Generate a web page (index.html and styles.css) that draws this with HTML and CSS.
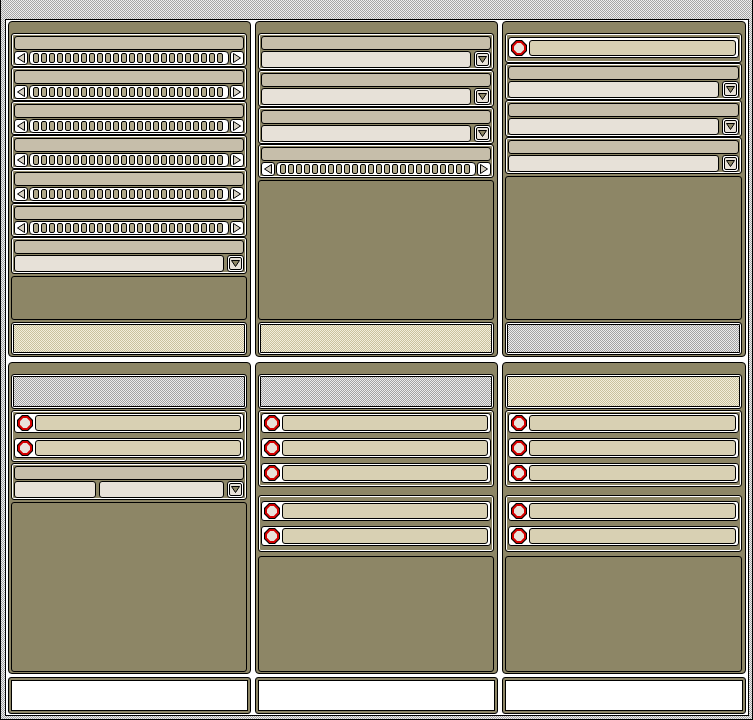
FILE: index.html
```html
<!DOCTYPE html>
<html>
<head>
<meta charset="utf-8">
<link rel="stylesheet" href="styles.css">
</head>
<body>
<div class="win">
  <div class="content">
    <div class="row r1">
      <div class="panel">
        <div class="grp"><div class="hdr"></div><div class="sb"><div class="arr"><svg width="12" height="12" viewBox="0 0 12 12"><polygon points="9.5,1.5 9.5,10.5 2.5,6" fill="#d6d0c2" stroke="#000"/></svg></div><div class="trough"><i></i><i></i><i></i><i></i><i></i><i></i><i></i><i></i><i></i><i></i><i></i><i></i><i></i><i></i><i></i><i></i><i></i><i></i><i></i><i></i><i></i><i></i><i></i><i></i></div><div class="arr"><svg width="12" height="12" viewBox="0 0 12 12"><polygon points="2.5,1.5 2.5,10.5 9.5,6" fill="#d6d0c2" stroke="#000"/></svg></div></div></div>
        <div class="grp"><div class="hdr"></div><div class="sb"><div class="arr"><svg width="12" height="12" viewBox="0 0 12 12"><polygon points="9.5,1.5 9.5,10.5 2.5,6" fill="#d6d0c2" stroke="#000"/></svg></div><div class="trough"><i></i><i></i><i></i><i></i><i></i><i></i><i></i><i></i><i></i><i></i><i></i><i></i><i></i><i></i><i></i><i></i><i></i><i></i><i></i><i></i><i></i><i></i><i></i><i></i></div><div class="arr"><svg width="12" height="12" viewBox="0 0 12 12"><polygon points="2.5,1.5 2.5,10.5 9.5,6" fill="#d6d0c2" stroke="#000"/></svg></div></div></div>
        <div class="grp"><div class="hdr"></div><div class="sb"><div class="arr"><svg width="12" height="12" viewBox="0 0 12 12"><polygon points="9.5,1.5 9.5,10.5 2.5,6" fill="#d6d0c2" stroke="#000"/></svg></div><div class="trough"><i></i><i></i><i></i><i></i><i></i><i></i><i></i><i></i><i></i><i></i><i></i><i></i><i></i><i></i><i></i><i></i><i></i><i></i><i></i><i></i><i></i><i></i><i></i><i></i></div><div class="arr"><svg width="12" height="12" viewBox="0 0 12 12"><polygon points="2.5,1.5 2.5,10.5 9.5,6" fill="#d6d0c2" stroke="#000"/></svg></div></div></div>
        <div class="grp"><div class="hdr"></div><div class="sb"><div class="arr"><svg width="12" height="12" viewBox="0 0 12 12"><polygon points="9.5,1.5 9.5,10.5 2.5,6" fill="#d6d0c2" stroke="#000"/></svg></div><div class="trough"><i></i><i></i><i></i><i></i><i></i><i></i><i></i><i></i><i></i><i></i><i></i><i></i><i></i><i></i><i></i><i></i><i></i><i></i><i></i><i></i><i></i><i></i><i></i><i></i></div><div class="arr"><svg width="12" height="12" viewBox="0 0 12 12"><polygon points="2.5,1.5 2.5,10.5 9.5,6" fill="#d6d0c2" stroke="#000"/></svg></div></div></div>
        <div class="grp"><div class="hdr"></div><div class="sb"><div class="arr"><svg width="12" height="12" viewBox="0 0 12 12"><polygon points="9.5,1.5 9.5,10.5 2.5,6" fill="#d6d0c2" stroke="#000"/></svg></div><div class="trough"><i></i><i></i><i></i><i></i><i></i><i></i><i></i><i></i><i></i><i></i><i></i><i></i><i></i><i></i><i></i><i></i><i></i><i></i><i></i><i></i><i></i><i></i><i></i><i></i></div><div class="arr"><svg width="12" height="12" viewBox="0 0 12 12"><polygon points="2.5,1.5 2.5,10.5 9.5,6" fill="#d6d0c2" stroke="#000"/></svg></div></div></div>
        <div class="grp"><div class="hdr"></div><div class="sb"><div class="arr"><svg width="12" height="12" viewBox="0 0 12 12"><polygon points="9.5,1.5 9.5,10.5 2.5,6" fill="#d6d0c2" stroke="#000"/></svg></div><div class="trough"><i></i><i></i><i></i><i></i><i></i><i></i><i></i><i></i><i></i><i></i><i></i><i></i><i></i><i></i><i></i><i></i><i></i><i></i><i></i><i></i><i></i><i></i><i></i><i></i></div><div class="arr"><svg width="12" height="12" viewBox="0 0 12 12"><polygon points="2.5,1.5 2.5,10.5 9.5,6" fill="#d6d0c2" stroke="#000"/></svg></div></div></div>
        <div class="grp"><div class="hdr"></div><div class="cb"><div class="entry"></div><div class="drop"><div class="dropin"><svg width="11" height="9" viewBox="0 0 11 9"><polygon points="1.5,1.5 9.5,1.5 5.5,7.5" fill="#8d8666" stroke="#000"/></svg></div></div></div></div>
        <div class="empty"></div>
        <div class="chk yel"></div>
      </div>

      <div class="panel">
        <div class="grp"><div class="hdr"></div><div class="cb"><div class="entry"></div><div class="drop"><div class="dropin"><svg width="11" height="9" viewBox="0 0 11 9"><polygon points="1.5,1.5 9.5,1.5 5.5,7.5" fill="#8d8666" stroke="#000"/></svg></div></div></div></div>
        <div class="grp"><div class="hdr"></div><div class="cb"><div class="entry"></div><div class="drop"><div class="dropin"><svg width="11" height="9" viewBox="0 0 11 9"><polygon points="1.5,1.5 9.5,1.5 5.5,7.5" fill="#8d8666" stroke="#000"/></svg></div></div></div></div>
        <div class="grp"><div class="hdr"></div><div class="cb"><div class="entry"></div><div class="drop"><div class="dropin"><svg width="11" height="9" viewBox="0 0 11 9"><polygon points="1.5,1.5 9.5,1.5 5.5,7.5" fill="#8d8666" stroke="#000"/></svg></div></div></div></div>
        <div class="grp"><div class="hdr"></div><div class="sb"><div class="arr"><svg width="12" height="12" viewBox="0 0 12 12"><polygon points="9.5,1.5 9.5,10.5 2.5,6" fill="#d6d0c2" stroke="#000"/></svg></div><div class="trough"><i></i><i></i><i></i><i></i><i></i><i></i><i></i><i></i><i></i><i></i><i></i><i></i><i></i><i></i><i></i><i></i><i></i><i></i><i></i><i></i><i></i><i></i><i></i><i></i></div><div class="arr"><svg width="12" height="12" viewBox="0 0 12 12"><polygon points="2.5,1.5 2.5,10.5 9.5,6" fill="#d6d0c2" stroke="#000"/></svg></div></div></div>
        <div class="empty"></div>
        <div class="chk yel"></div>
      </div>

      <div class="panel">
        <div class="grp rg"><div class="rr"><svg class="radio" width="16" height="16" viewBox="0 0 16 16"><polygon points="5,0 11,0 16,5 16,11 11,16 5,16 0,11 0,5" fill="#000"/><polygon points="5.4,1 10.6,1 15,5.4 15,10.6 10.6,15 5.4,15 1,10.6 1,5.4" fill="#d40000"/><polygon points="6.2,3 9.8,3 13,6.2 13,9.8 9.8,13 6.2,13 3,9.8 3,6.2" fill="#e8e2da"/></svg><div class="rbar"></div></div></div>
        <div class="grp"><div class="hdr"></div><div class="cb"><div class="entry"></div><div class="drop"><div class="dropin"><svg width="11" height="9" viewBox="0 0 11 9"><polygon points="1.5,1.5 9.5,1.5 5.5,7.5" fill="#8d8666" stroke="#000"/></svg></div></div></div></div>
        <div class="grp"><div class="hdr"></div><div class="cb"><div class="entry"></div><div class="drop"><div class="dropin"><svg width="11" height="9" viewBox="0 0 11 9"><polygon points="1.5,1.5 9.5,1.5 5.5,7.5" fill="#8d8666" stroke="#000"/></svg></div></div></div></div>
        <div class="grp"><div class="hdr"></div><div class="cb"><div class="entry"></div><div class="drop"><div class="dropin"><svg width="11" height="9" viewBox="0 0 11 9"><polygon points="1.5,1.5 9.5,1.5 5.5,7.5" fill="#8d8666" stroke="#000"/></svg></div></div></div></div>
        <div class="empty"></div>
        <div class="chk grey"></div>
      </div>
    </div>

    <div class="row r2">
      <div class="panel">
        <div class="chk grey"></div>
        <div class="grp rg">
          <div class="rr"><svg class="radio" width="16" height="16" viewBox="0 0 16 16"><polygon points="5,0 11,0 16,5 16,11 11,16 5,16 0,11 0,5" fill="#000"/><polygon points="5.4,1 10.6,1 15,5.4 15,10.6 10.6,15 5.4,15 1,10.6 1,5.4" fill="#d40000"/><polygon points="6.2,3 9.8,3 13,6.2 13,9.8 9.8,13 6.2,13 3,9.8 3,6.2" fill="#e8e2da"/></svg><div class="rbar"></div></div>
          <div class="rr"><svg class="radio" width="16" height="16" viewBox="0 0 16 16"><polygon points="5,0 11,0 16,5 16,11 11,16 5,16 0,11 0,5" fill="#000"/><polygon points="5.4,1 10.6,1 15,5.4 15,10.6 10.6,15 5.4,15 1,10.6 1,5.4" fill="#d40000"/><polygon points="6.2,3 9.8,3 13,6.2 13,9.8 9.8,13 6.2,13 3,9.8 3,6.2" fill="#e8e2da"/></svg><div class="rbar"></div></div>
        </div>
        <div class="grp"><div class="hdr"></div><div class="cb"><div class="entry small"></div><div class="entry"></div><div class="drop"><div class="dropin"><svg width="11" height="9" viewBox="0 0 11 9"><polygon points="1.5,1.5 9.5,1.5 5.5,7.5" fill="#8d8666" stroke="#000"/></svg></div></div></div></div>
        <div class="empty"></div>
      </div>

      <div class="panel">
        <div class="chk grey"></div>
        <div class="grp rg">
          <div class="rr"><svg class="radio" width="16" height="16" viewBox="0 0 16 16"><polygon points="5,0 11,0 16,5 16,11 11,16 5,16 0,11 0,5" fill="#000"/><polygon points="5.4,1 10.6,1 15,5.4 15,10.6 10.6,15 5.4,15 1,10.6 1,5.4" fill="#d40000"/><polygon points="6.2,3 9.8,3 13,6.2 13,9.8 9.8,13 6.2,13 3,9.8 3,6.2" fill="#e8e2da"/></svg><div class="rbar"></div></div>
          <div class="rr"><svg class="radio" width="16" height="16" viewBox="0 0 16 16"><polygon points="5,0 11,0 16,5 16,11 11,16 5,16 0,11 0,5" fill="#000"/><polygon points="5.4,1 10.6,1 15,5.4 15,10.6 10.6,15 5.4,15 1,10.6 1,5.4" fill="#d40000"/><polygon points="6.2,3 9.8,3 13,6.2 13,9.8 9.8,13 6.2,13 3,9.8 3,6.2" fill="#e8e2da"/></svg><div class="rbar"></div></div>
          <div class="rr"><svg class="radio" width="16" height="16" viewBox="0 0 16 16"><polygon points="5,0 11,0 16,5 16,11 11,16 5,16 0,11 0,5" fill="#000"/><polygon points="5.4,1 10.6,1 15,5.4 15,10.6 10.6,15 5.4,15 1,10.6 1,5.4" fill="#d40000"/><polygon points="6.2,3 9.8,3 13,6.2 13,9.8 9.8,13 6.2,13 3,9.8 3,6.2" fill="#e8e2da"/></svg><div class="rbar"></div></div>
        </div>
        <div class="grp rg sep">
          <div class="rr"><svg class="radio" width="16" height="16" viewBox="0 0 16 16"><polygon points="5,0 11,0 16,5 16,11 11,16 5,16 0,11 0,5" fill="#000"/><polygon points="5.4,1 10.6,1 15,5.4 15,10.6 10.6,15 5.4,15 1,10.6 1,5.4" fill="#d40000"/><polygon points="6.2,3 9.8,3 13,6.2 13,9.8 9.8,13 6.2,13 3,9.8 3,6.2" fill="#e8e2da"/></svg><div class="rbar"></div></div>
          <div class="rr"><svg class="radio" width="16" height="16" viewBox="0 0 16 16"><polygon points="5,0 11,0 16,5 16,11 11,16 5,16 0,11 0,5" fill="#000"/><polygon points="5.4,1 10.6,1 15,5.4 15,10.6 10.6,15 5.4,15 1,10.6 1,5.4" fill="#d40000"/><polygon points="6.2,3 9.8,3 13,6.2 13,9.8 9.8,13 6.2,13 3,9.8 3,6.2" fill="#e8e2da"/></svg><div class="rbar"></div></div>
        </div>
        <div class="empty wide"></div>
      </div>

      <div class="panel">
        <div class="chk yel"></div>
        <div class="grp rg">
          <div class="rr"><svg class="radio" width="16" height="16" viewBox="0 0 16 16"><polygon points="5,0 11,0 16,5 16,11 11,16 5,16 0,11 0,5" fill="#000"/><polygon points="5.4,1 10.6,1 15,5.4 15,10.6 10.6,15 5.4,15 1,10.6 1,5.4" fill="#d40000"/><polygon points="6.2,3 9.8,3 13,6.2 13,9.8 9.8,13 6.2,13 3,9.8 3,6.2" fill="#e8e2da"/></svg><div class="rbar"></div></div>
          <div class="rr"><svg class="radio" width="16" height="16" viewBox="0 0 16 16"><polygon points="5,0 11,0 16,5 16,11 11,16 5,16 0,11 0,5" fill="#000"/><polygon points="5.4,1 10.6,1 15,5.4 15,10.6 10.6,15 5.4,15 1,10.6 1,5.4" fill="#d40000"/><polygon points="6.2,3 9.8,3 13,6.2 13,9.8 9.8,13 6.2,13 3,9.8 3,6.2" fill="#e8e2da"/></svg><div class="rbar"></div></div>
          <div class="rr"><svg class="radio" width="16" height="16" viewBox="0 0 16 16"><polygon points="5,0 11,0 16,5 16,11 11,16 5,16 0,11 0,5" fill="#000"/><polygon points="5.4,1 10.6,1 15,5.4 15,10.6 10.6,15 5.4,15 1,10.6 1,5.4" fill="#d40000"/><polygon points="6.2,3 9.8,3 13,6.2 13,9.8 9.8,13 6.2,13 3,9.8 3,6.2" fill="#e8e2da"/></svg><div class="rbar"></div></div>
        </div>
        <div class="grp rg sep">
          <div class="rr"><svg class="radio" width="16" height="16" viewBox="0 0 16 16"><polygon points="5,0 11,0 16,5 16,11 11,16 5,16 0,11 0,5" fill="#000"/><polygon points="5.4,1 10.6,1 15,5.4 15,10.6 10.6,15 5.4,15 1,10.6 1,5.4" fill="#d40000"/><polygon points="6.2,3 9.8,3 13,6.2 13,9.8 9.8,13 6.2,13 3,9.8 3,6.2" fill="#e8e2da"/></svg><div class="rbar"></div></div>
          <div class="rr"><svg class="radio" width="16" height="16" viewBox="0 0 16 16"><polygon points="5,0 11,0 16,5 16,11 11,16 5,16 0,11 0,5" fill="#000"/><polygon points="5.4,1 10.6,1 15,5.4 15,10.6 10.6,15 5.4,15 1,10.6 1,5.4" fill="#d40000"/><polygon points="6.2,3 9.8,3 13,6.2 13,9.8 9.8,13 6.2,13 3,9.8 3,6.2" fill="#e8e2da"/></svg><div class="rbar"></div></div>
        </div>
        <div class="empty wide"></div>
      </div>
    </div>

    <div class="row r3">
      <div class="wbox"></div>
      <div class="wbox"></div>
      <div class="wbox"></div>
    </div>
  </div>
</div>
</body>
</html>
```
FILE: styles.css
```css
html, body { margin: 0; padding: 0; }
body {
  width: 753px; height: 720px; overflow: hidden;
  font-family: "DejaVu Sans", sans-serif;
}
.win {
  width: 753px; height: 720px; box-sizing: border-box;
  padding: 19px 4px 4px 5px;
  background: repeating-conic-gradient(#a4a4a4 0 25%, #eeeeee 0 50%) 0 0 / 2px 2px;
  border-left: 1px solid #000; border-right: 1px solid #000; border-bottom: 1px solid #000;
}
.content {
  width: 744px; height: 697px; box-sizing: border-box;
  margin-left: -1px;
  border: 1px solid #000;
  background: #fff;
  padding: 1px 2px 1px 2px;
  display: flex; flex-direction: column;
}
.row { display: flex; gap: 4px; }
.r1 { height: 336px; }
.r2 { height: 312px; margin-top: 5px; }
.r3 { height: 37px; margin-top: 3px; }
.row > div:nth-child(1) { width: 243px; }
.row > div:nth-child(2) { width: 243px; }
.row > div:nth-child(3) { width: 244px; }

.panel {
  box-sizing: border-box;
  background: #8d8666;
  border: 1px solid #000;
  border-radius: 4px;
  padding: 11px 3px 1px 2px;
  display: flex; flex-direction: column;
}
.grp {
  border: 1px solid #000;
  border-radius: 3px;
  background: #8d8666;
  box-shadow: inset 0 0 0 1px #fff;
  padding: 2px 2px 1px 2px;
}
.hdr {
  height: 12px;
  border: 1px solid #000;
  border-radius: 3px;
  background: #c6beaa;
}
.sb { display: flex; gap: 1px; margin-top: 1px; height: 14px; }
.arr {
  width: 14px; height: 14px; box-sizing: border-box;
  border: 1px solid #000; border-radius: 3px; background: #fff;
  display: flex; align-items: center; justify-content: center;
}
.arr svg { display: block; }
.trough {
  flex: 1; box-sizing: border-box;
  border: 1px solid #000; border-radius: 4px; background: #fff;
  padding: 0 3px; display: flex; gap: 2px; align-items: center;
  overflow: hidden;
}
.trough i {
  flex: none; width: 6px; height: 10px; box-sizing: border-box;
  border: 1px solid #000; border-radius: 2px; background: #b1a98b;
}
.cb { display: flex; gap: 3px; margin-top: 1px; height: 17px; }
.entry {
  flex: 1; box-sizing: border-box;
  border: 1px solid #000; border-radius: 3px; background: #e7e1d8;
}
.entry.small { flex: none; width: 82px; }
.drop {
  width: 17px; box-sizing: border-box;
  border: 1px solid #000; border-radius: 3px; background: #fff;
  padding: 1px;
}
.dropin {
  height: 100%; box-sizing: border-box;
  border: 1px solid #000; border-radius: 2px; background: #e7e1d8;
  display: flex; align-items: center; justify-content: center;
}
.dropin svg { display: block; }
.rr {
  display: flex; gap: 2px; align-items: center;
  height: 20px; box-sizing: border-box; flex: none;
  border: 1px solid #000; border-radius: 3px; background: #fff;
  padding: 1px 2px;
}
.rg { display: flex; flex-direction: column; gap: 5px; padding: 2px 2px 3px 2px; }
.r1 .rg { padding: 3px 2px 4px 2px; }
.r1 .rg .rr { height: 21px; }
.rg.sep { margin-top: 8px; padding-top: 5px; padding-bottom: 5px; }
.radio { display: block; flex: none; }
.rbar {
  flex: 1; height: 16px; box-sizing: border-box;
  border: 1px solid #000; border-radius: 3px; background: #d8d0b3;
}
.empty {
  flex: 1; margin-top: 2px;
  border: 1px solid #000; border-radius: 3px; background: #8d8666;
}
.empty.wide { margin-top: 4px; }
.chk {
  height: 33px; box-sizing: border-box; flex: none;
  border: 1px solid #000; border-radius: 3px;
  box-shadow: inset 0 0 0 1px #fff, inset 0 0 0 2px #000;
}
.r1 .chk { margin-top: 2px; }
.r2 .chk { height: 35px; }
.chk.yel { background: repeating-conic-gradient(#c9c19d 0 25%, #f3eedb 0 50%) 0 0 / 2px 2px; }
.chk.grey { background: repeating-conic-gradient(#a2a2a2 0 25%, #ececec 0 50%) 0 0 / 2px 2px; }
.r2 .grp { margin-top: 1px; }
.r2 .rg.sep { margin-top: 8px; }
.wbox {
  box-sizing: border-box;
  border: 1px solid #000; border-radius: 3px; background: #fff;
  box-shadow: inset 0 0 0 2px #8d8666, inset 0 0 0 3px #000;
}
```
